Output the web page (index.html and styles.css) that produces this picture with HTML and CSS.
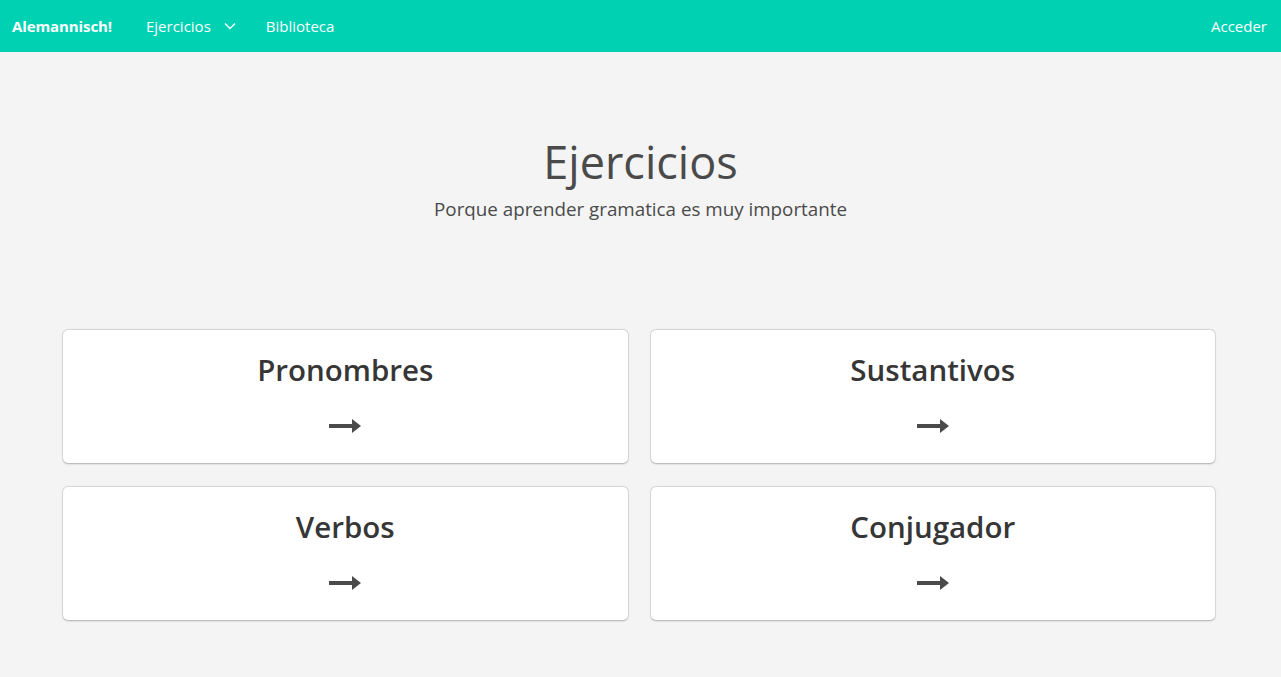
FILE: index.html
```html
<!DOCTYPE html>
<html lang="es">
<head>
<meta charset="utf-8">
<title>Alemannisch!</title>
<link rel="stylesheet" href="styles.css">
</head>
<body>
<nav class="navbar">
  <div class="nav-start">
    <a class="brand">Alemannisch!</a>
    <a class="nav-item">Ejercicios
      <svg class="chev" width="12" height="8" viewBox="0 0 12 8"><path d="M1 1.5 L6 6.5 L11 1.5" fill="none" stroke="#fff" stroke-width="1.3"/></svg>
    </a>
    <a class="nav-item">Biblioteca</a>
  </div>
  <div class="nav-end">
    <a class="nav-item">Acceder</a>
  </div>
</nav>
<section class="hero">
  <h1 class="title">Ejercicios</h1>
  <h2 class="subtitle">Porque aprender gramatica es muy importante</h2>
</section>
<section class="cards">
  <div class="card"><h3 class="card-title">Pronombres</h3><svg class="arrow" width="32" height="14" viewBox="0 0 32 14"><rect x="0" y="5" width="24" height="4" fill="#4a4a4a"/><path d="M23 0 L32 7 L23 14 Z" fill="#4a4a4a"/></svg></div>
  <div class="card"><h3 class="card-title">Sustantivos</h3><svg class="arrow" width="32" height="14" viewBox="0 0 32 14"><rect x="0" y="5" width="24" height="4" fill="#4a4a4a"/><path d="M23 0 L32 7 L23 14 Z" fill="#4a4a4a"/></svg></div>
  <div class="card"><h3 class="card-title">Verbos</h3><svg class="arrow" width="32" height="14" viewBox="0 0 32 14"><rect x="0" y="5" width="24" height="4" fill="#4a4a4a"/><path d="M23 0 L32 7 L23 14 Z" fill="#4a4a4a"/></svg></div>
  <div class="card"><h3 class="card-title">Conjugador</h3><svg class="arrow" width="32" height="14" viewBox="0 0 32 14"><rect x="0" y="5" width="24" height="4" fill="#4a4a4a"/><path d="M23 0 L32 7 L23 14 Z" fill="#4a4a4a"/></svg></div>
</section>
</body>
</html>
```
FILE: styles.css
```css
* { box-sizing: border-box; }
html, body { margin: 0; padding: 0; }
body {
  background: #f4f4f4;
  font-family: "Open Sans", "Noto Sans", sans-serif;
  color: #4a4a4a;
  height: 677px;
  overflow: hidden;
}
.navbar {
  height: 52px;
  background: #00d1b2;
  display: flex;
  justify-content: space-between;
  align-items: center;
  padding: 0 14px 0 12px;
  color: #fff;
  font-size: 15px;
}
.nav-start { display: flex; align-items: center; }
.brand { font-weight: 700; margin-right: 34px; letter-spacing: -0.1px; }
.nav-item { display: flex; align-items: center; margin-right: 30px; }
.nav-end .nav-item { margin-right: 0; }
.chev { margin-left: 13px; }
.hero {
  display: flex;
  flex-direction: column;
  align-items: center;
  padding-top: 82px;
  height: 278px;
}
.title {
  margin: 0;
  font-size: 45px;
  font-weight: 400;
  line-height: 56px;
  color: #4a4a4a;
}
.subtitle {
  margin: 6px 0 0;
  font-size: 18.8px;
  font-weight: 400;
  line-height: 26px;
  color: #4a4a4a;
}
.cards {
  width: 1152px;
  margin-left: 63px;
  display: grid;
  grid-template-columns: 1fr 1fr;
  gap: 24px 23px;
}
.card {
  background: #fff;
  height: 133px;
  border-radius: 5px;
  box-shadow: 0 0.5px 2px rgba(10,10,10,0.25), 0 0 0 1px rgba(10,10,10,0.06);
  display: flex;
  flex-direction: column;
  align-items: center;
  padding-top: 20px;
}
.card-title {
  margin: 0;
  font-size: 29.5px;
  font-weight: 600;
  line-height: 40px;
  color: #363636;
}
.arrow { margin-top: 29px; }
```
